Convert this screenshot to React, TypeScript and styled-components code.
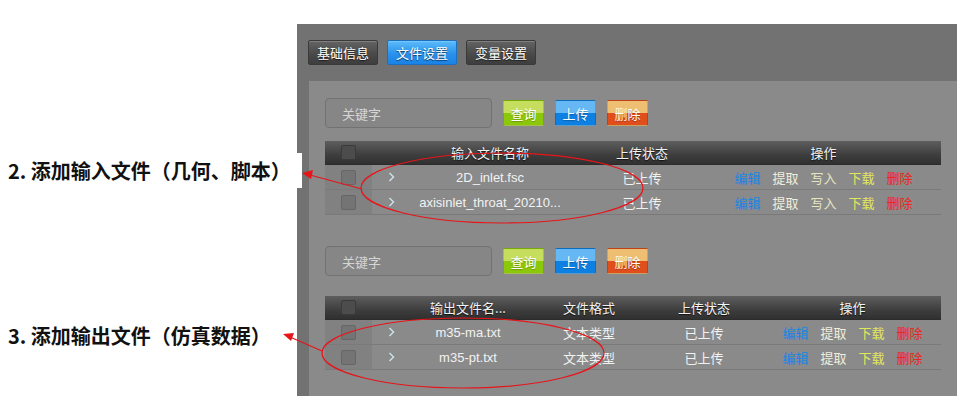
import React from "react";
import styled, {createGlobalStyle} from "styled-components";

const GlobalStyle = createGlobalStyle`
  html, body {
    margin: 0;
    padding: 0;
    background: #ffffff;
  }
  * {
    box-sizing: border-box;
  }
`;

const cjk = `"Noto Sans CJK SC", "Liberation Sans", sans-serif`;
const latin = `"Liberation Sans", "Noto Sans CJK SC", sans-serif`;

const Page = styled.div`
  position: relative;
  width: 964px;
  height: 405px;
  display: flex;
  background: #ffffff;
  font-family: ${cjk};
`;

const Notes = styled.div`
  width: 297px;
  display: flex;
  flex-direction: column;
  padding-top: 153px;
  gap: 130px;
`;

const Note = styled.div<{ $overlap?: boolean }>`
  position: relative;
  z-index: 2;
  height: 35px;
  display: flex;
  align-items: center;
  padding-left: 8px;
  margin-right: ${p => (p.$overlap ? "-5px" : "0")};
  background: #ffffff;
  font-family: ${cjk};
  font-weight: 700;
  font-size: 20px;
  color: #111111;
  white-space: nowrap;
`;

const Panel = styled.div`
  margin-top: 24px;
  width: 660px;
  height: 372px;
  background: #727272;
  display: flex;
  flex-direction: column;
`;

const TabBar = styled.div`
  height: 57px;
  display: flex;
  gap: 9px;
  padding: 16px 0 0 11px;
`;

const Tab = styled.div<{ $active?: boolean }>`
  width: 70px;
  height: 25px;
  display: flex;
  align-items: center;
  justify-content: center;
  font-size: 13px;
  color: #ffffff;
  text-shadow: 0 1px 1px rgba(0, 0, 0, 0.6);
  border: 1px solid ${p => (p.$active ? "#1b6fc0" : "#3a3a3a")};
  border-radius: 2px;
  background: ${p =>
    p.$active
      ? "linear-gradient(#5cbcfa, #2a92ec 55%, #1a82e4)"
      : "linear-gradient(#646464, #4a4a4a 55%, #3e3e3e)"};
  box-shadow: inset 0 1px 0 rgba(255, 255, 255, 0.18);
`;

const Inner = styled.div`
  flex: 1;
  margin-left: 12px;
  background: #8a8a8a;
  padding: 17px 16px 0 16px;
  display: flex;
  flex-direction: column;
`;

const SearchRow = styled.div<{ $top?: number }>`
  display: flex;
  align-items: center;
  gap: 11px;
  margin-top: ${p => p.$top ?? 0}px;
`;

const SearchInput = styled.div`
  width: 167px;
  height: 30px;
  border: 1px solid #727272;
  border-radius: 4px;
  background: #868686;
  display: flex;
  align-items: center;
  padding-left: 16px;
  font-size: 13px;
  color: #d6d6d6;
`;

const tones = {
  green: ["#c6de5e", "#8cc80a"],
  blue: ["#66b8f4", "#0d80e2"],
  orange: ["#eebf72", "#e04e1c"],
};

const Btn = styled.div<{ $tone: keyof typeof tones }>`
  width: 41px;
  height: 26px;
  display: flex;
  align-items: center;
  justify-content: center;
  font-size: 13px;
  color: #ffffff;
  text-shadow: 0 1px 1px rgba(0, 0, 0, 0.25);
  border-radius: 2px;
  border: 1px solid rgba(0, 0, 0, 0.15);
  background: linear-gradient(
    ${p => tones[p.$tone][0]} 0%,
    ${p => tones[p.$tone][0]} 48%,
    ${p => tones[p.$tone][1]} 52%,
    ${p => tones[p.$tone][1]} 100%
  );
`;

const Table = styled.div<{ $top: number }>`
  margin-top: ${p => p.$top}px;
  display: flex;
  flex-direction: column;
`;

const Row = styled.div<{ $cols: string; $head?: boolean }>`
  display: grid;
  grid-template-columns: ${p => p.$cols};
  height: ${p => (p.$head ? "24px" : "25px")};
  align-items: stretch;
  font-size: 13px;
  color: #f2f2f2;
  background: ${p => (p.$head ? "linear-gradient(#5e5e5e, #3e3e3e 60%, #303030)" : "transparent")};
  border-bottom: 1px solid ${p => (p.$head ? "#2c2c2c" : "#7a7a7a")};
  text-shadow: ${p => (p.$head ? "0 1px 1px rgba(0,0,0,0.7)" : "none")};
`;

const Cell = styled.div<{ $latin?: boolean }>`
  display: flex;
  align-items: center;
  justify-content: center;
  white-space: nowrap;
  font-family: ${p => (p.$latin ? latin : cjk)};
`;

const CheckCell = styled.div<{ $head?: boolean }>`
  display: flex;
  align-items: center;
  justify-content: center;
  background: ${p => (p.$head ? "transparent" : "rgba(0, 0, 0, 0.06)")};
`;

const Check = styled.span<{ $head?: boolean }>`
  width: 15px;
  height: 15px;
  border-radius: 2px;
  border: 1px solid ${p => (p.$head ? "#3a3a3a" : "#666666")};
  background: ${p => (p.$head ? "#4c4c4c" : "#747474")};
`;

const ChevronCell = styled.div`
  display: flex;
  align-items: center;
  padding-left: 16px;
`;

const Actions = styled.div`
  display: flex;
  align-items: center;
  justify-content: center;
  gap: 12px;
`;

const actionColors: Record<string, string> = {
  编辑: "#1d84e6",
  提取: "#f0efdc",
  写入: "#e8e6c2",
  下载: "#e2e85c",
  删除: "#e8281a",
};

const Action = styled.span<{ $color: string }>`
  color: ${p => p.$color};
  font-size: 13px;
`;

const Overlay = styled.svg`
  position: absolute;
  left: 0;
  top: 0;
  z-index: 5;
  pointer-events: none;
`;

const Chevron = () => (
  <svg width="7" height="10" viewBox="0 0 7 10">
    <polyline points="1.5,1 5.5,5 1.5,9" fill="none" stroke="#cfe4ec" strokeWidth="1.4"/>
  </svg>
);

const cols1 = "47px 30px 176px 128px 1fr";
const cols2 = "47px 30px 132px 110px 120px 1fr";

const inputFiles = ["2D_inlet.fsc", "axisinlet_throat_20210..."];
const outputFiles = ["m35-ma.txt", "m35-pt.txt"];

const SearchBar = ({top}: { top?: number }) => (
  <SearchRow $top={top}>
    <SearchInput>关键字</SearchInput>
    <Btn $tone="green">查询</Btn>
    <Btn $tone="blue">上传</Btn>
    <Btn $tone="orange">删除</Btn>
  </SearchRow>
);

export default function App() {
  return (
    <>
      <GlobalStyle/>
      <Page>
        <Notes>
          <Note $overlap>2. 添加输入文件（几何、脚本）</Note>
          <Note>3. 添加输出文件（仿真数据）</Note>
        </Notes>

        <Panel>
          <TabBar>
            <Tab>基础信息</Tab>
            <Tab $active>文件设置</Tab>
            <Tab>变量设置</Tab>
          </TabBar>

          <Inner>
            <SearchBar/>
            <Table $top={13}>
              <Row $cols={cols1} $head>
                <CheckCell $head><Check $head/></CheckCell>
                <div/>
                <Cell>输入文件名称</Cell>
                <Cell>上传状态</Cell>
                <Cell>操作</Cell>
              </Row>
              {inputFiles.map(name => (
                <Row $cols={cols1} key={name}>
                  <CheckCell><Check/></CheckCell>
                  <ChevronCell><Chevron/></ChevronCell>
                  <Cell $latin>{name}</Cell>
                  <Cell>已上传</Cell>
                  <Actions>
                    {["编辑", "提取", "写入", "下载", "删除"].map(a => (
                      <Action key={a} $color={actionColors[a]}>{a}</Action>
                    ))}
                  </Actions>
                </Row>
              ))}
            </Table>

            <SearchBar top={31}/>
            <Table $top={20}>
              <Row $cols={cols2} $head>
                <CheckCell $head><Check $head/></CheckCell>
                <div/>
                <Cell>输出文件名...</Cell>
                <Cell>文件格式</Cell>
                <Cell>上传状态</Cell>
                <Cell>操作</Cell>
              </Row>
              {outputFiles.map(name => (
                <Row $cols={cols2} key={name}>
                  <CheckCell><Check/></CheckCell>
                  <ChevronCell><Chevron/></ChevronCell>
                  <Cell $latin>{name}</Cell>
                  <Cell>文本类型</Cell>
                  <Cell>已上传</Cell>
                  <Actions>
                    {["编辑", "提取", "下载", "删除"].map(a => (
                      <Action key={a} $color={actionColors[a]}>{a}</Action>
                    ))}
                  </Actions>
                </Row>
              ))}
            </Table>
          </Inner>
        </Panel>

        <Overlay width="964" height="405" viewBox="0 0 964 405">
          <g fill="none" stroke="#e8141a" strokeWidth="1.2">
            <ellipse cx="502" cy="188" rx="141" ry="35"/>
            <ellipse cx="463" cy="353" rx="141" ry="35"/>
            <line x1="362" y1="189" x2="310" y2="175"/>
            <line x1="322" y1="351" x2="290" y2="337"/>
          </g>
          <g fill="#e8141a">
            <polygon points="302,173 313,170 311,179"/>
            <polygon points="283,334 294,333 291,341"/>
          </g>
        </Overlay>
      </Page>
    </>
  );
}
